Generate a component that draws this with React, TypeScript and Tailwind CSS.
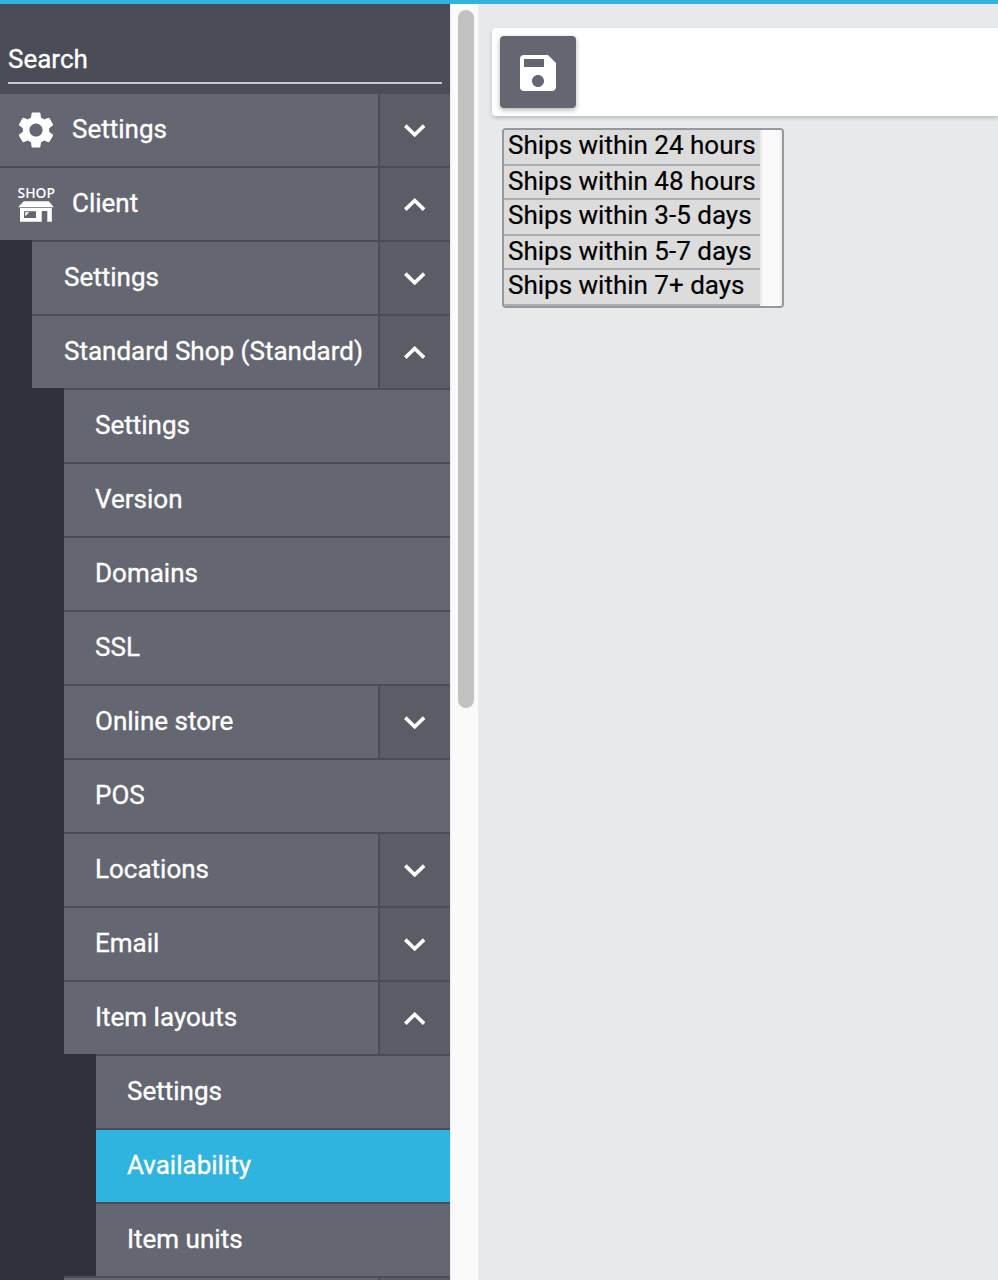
import React from "react";
import { MdSettings, MdSave } from "react-icons/md";

type Row = {
  label: string;
  level: 0 | 1 | 2 | 3;
  toggle?: "down" | "up";
  icon?: "gear" | "shop";
  active?: boolean;
};

const rows: Row[] = [
  { label: "Settings", level: 0, toggle: "down", icon: "gear" },
  { label: "Client", level: 0, toggle: "up", icon: "shop" },
  { label: "Settings", level: 1, toggle: "down" },
  { label: "Standard Shop (Standard)", level: 1, toggle: "up" },
  { label: "Settings", level: 2 },
  { label: "Version", level: 2 },
  { label: "Domains", level: 2 },
  { label: "SSL", level: 2 },
  { label: "Online store", level: 2, toggle: "down" },
  { label: "POS", level: 2 },
  { label: "Locations", level: 2, toggle: "down" },
  { label: "Email", level: 2, toggle: "down" },
  { label: "Item layouts", level: 2, toggle: "up" },
  { label: "Settings", level: 3 },
  { label: "Availability", level: 3, active: true },
  { label: "Item units", level: 3 },
  { label: "", level: 2, toggle: "down" },
];

const indent = ["ml-0", "ml-8", "ml-16", "ml-24"];
const textPad = ["pl-[72px]", "pl-8", "pl-[31px]", "pl-[31px]"];

const options: { label: string; size: string }[] = [
  { label: "Ships within 24 hours", size: "h-[36px]" },
  { label: "Ships within 48 hours", size: "h-[34px]" },
  { label: "Ships within 3-5 days", size: "h-[36px]" },
  { label: "Ships within 5-7 days", size: "h-[34px]" },
  { label: "Ships within 7+ days", size: "h-[36px]" },
];

function Chevron({ up }: { up: boolean }) {
  return (
    <svg width="25" height="16" viewBox="0 0 25 16" fill="none" stroke="white" strokeWidth="3.6">
      <path d={up ? "M2.3 13.6 11.7 4.4 21.1 13.6" : "M2.3 3.6 11.7 12.8 21.1 3.6"} />
    </svg>
  );
}

function ShopIcon() {
  return (
    <svg
      className="overflow-visible"
      width="40"
      height="48"
      viewBox="0 -6 40 48"
      fill="white"
    >
      <text
        x="0.6"
        y="12.2"
        textLength="37.4"
        lengthAdjust="spacingAndGlyphs"
        fontFamily="Open Sans"
        fontWeight="600"
        fontSize="14"
      >
        SHOP
      </text>
      <path d="M6.8 15.3H31.8L36.3 20.5V21.3H1.7V20.5Z" />
      <path
        fillRule="evenodd"
        d="M3 22.1H34.8V35.7H30.3V25H24.7V35.7H3ZM7 25.2V32H19V25.2Z"
      />
      <path d="M8.2 26.3H12.2L8.2 30.3Z" />
    </svg>
  );
}

function NavRow({ row }: { row: Row }) {
  return (
    <div className={`flex h-[74px] shrink-0 border-t-2 border-[#4a4c57] ${indent[row.level]}`}>
      <div
        className={`flex min-w-0 flex-1 items-center ${row.active ? "bg-[#2fb3df]" : "bg-[#646671]"} ${row.icon ? "pl-[17px]" : textPad[row.level]}`}
      >
        {row.icon === "gear" && (
          <span className="w-[55px]">
            <MdSettings className="-ml-[3px] size-[44px] text-white" />
          </span>
        )}
        {row.icon === "shop" && (
          <span className="w-[55px]">
            <ShopIcon />
          </span>
        )}
        <span className="whitespace-nowrap pb-[2px] leading-[30px] [-webkit-text-stroke:0.35px_white]">
          {row.label}
        </span>
      </div>
      {row.toggle && (
        <div className="flex w-[72px] items-center justify-center border-l-2 border-[#4a4c57] bg-[#5b5d66]">
          <Chevron up={row.toggle === "up"} />
        </div>
      )}
    </div>
  );
}

export default function App() {
  return (
    <div className="flex h-[1280px] w-full flex-col overflow-hidden bg-[#e8e9eb] font-['Roboto',sans-serif] text-[26px]">
      <div className="h-1 shrink-0 bg-[#2fb3df]" />
      <div className="flex min-h-0 flex-1">
        <aside className="flex w-[450px] shrink-0 flex-col overflow-hidden bg-[#30323b] text-white">
          <div className="h-[88px] shrink-0 bg-[#4a4c57] px-2 pt-[39px]">
            <div className="h-[41px] border-b-2 border-[#c7c8cb] leading-[32px] [-webkit-text-stroke:0.35px_white]">
              Search
            </div>
          </div>
          {rows.map((row, i) => (
            <NavRow key={i} row={row} />
          ))}
        </aside>
        <div className="w-[29px] shrink-0 border-x border-l-[#e9e9e9] border-r-[#ededed] bg-[#fafafa] pl-[7px] pt-[6px]">
          <div className="h-[698px] w-4 rounded-full bg-[#c2c2c2]" />
        </div>
        <main className="min-w-0 flex-1 pl-[13px] pt-6">
          <div className="h-[88px] rounded-l-[4px] bg-white p-2 shadow-[0_2px_4px_rgba(0,0,0,0.2)]">
            <button className="flex h-[72px] w-[76px] items-center justify-center rounded-[4px] bg-[#646671] pt-px shadow-[0_2px_5px_rgba(0,0,0,0.3)]">
              <MdSave className="size-[48px] text-white" />
            </button>
          </div>
          <div className="ml-[10px] mt-3 flex h-[180px] w-[282px] overflow-hidden rounded-[4px] border-2 border-[#96989f] bg-[#fafafa] text-black">
            <div className="w-[256px]">
              {options.map((option) => (
                <div
                  key={option.label}
                  className={`whitespace-nowrap border-b-2 border-[#aaacb2] bg-[#dcdcdc] pl-1 leading-[31px] [-webkit-text-stroke:0.2px_black] ${option.size}`}
                >
                  {option.label}
                </div>
              ))}
            </div>
            <div className="flex-1 border-x-2 border-l-[#ececec] border-r-[#f0f0f0]" />
          </div>
        </main>
      </div>
    </div>
  );
}
